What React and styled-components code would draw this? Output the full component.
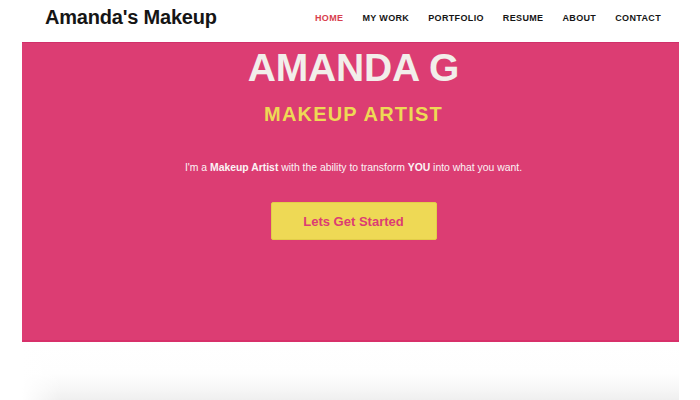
import React from 'react'
import styled, { createGlobalStyle } from 'styled-components'

const pink = '#dc3d73'
const yellow = '#eed955'

const Global = createGlobalStyle`
  body {
    margin: 0;
    background: #fff;
    font-family: "Liberation Sans", Arial, sans-serif;
    overflow: hidden;
  }
`

const Page = styled.div`
  width: 700px;
  height: 400px;
  display: flex;
  flex-direction: column;
  overflow: hidden;
  & > * { flex-shrink: 0; }
`

const Header = styled.header`
  height: 42px;
  display: flex;
  align-items: center;
  justify-content: space-between;
  padding: 0 39px 0 45px;
  box-sizing: border-box;
`

const Logo = styled.h1`
  margin: 0;
  margin-top: -7px;
  font-size: 20px;
  font-weight: 700;
  color: #151515;
  letter-spacing: -0.2px;
`

const Nav = styled.ul`
  display: flex;
  gap: 19px;
  margin: 0;
  margin-top: -7px;
  padding: 0;
  list-style: none;
`

const NavItem = styled.li`
  font-size: 9px;
  font-weight: 700;
  letter-spacing: 0.35px;
  color: ${props => props.active ? '#d8404e' : '#151515'};
`

const Hero = styled.section`
  margin: 0 21px 0 22px;
  padding-left: 6px;
  height: 300px;
  background: ${pink};
  border-top: 1px solid #d0306a;
  border-bottom: 2px solid #d8306a;
  box-sizing: border-box;
  display: flex;
  flex-direction: column;
  align-items: center;
  color: #fff;
`

const Name = styled.h2`
  margin: 2px 0 0;
  font-size: 39px;
  font-weight: 700;
  color: #f2eeea;
  letter-spacing: -0.2px;
  line-height: 46px;
`

const Role = styled.h3`
  margin: 11px 0 0;
  font-size: 20px;
  font-weight: 700;
  color: ${yellow};
  letter-spacing: 1.2px;
  line-height: 24px;
`

const Tagline = styled.p`
  margin: 36px 0 0;
  font-size: 10.4px;
  color: #fbf3f5;
  b { font-weight: 700; }
`

const StartButton = styled.button`
  margin-top: 29px;
  width: 166px;
  height: 38px;
  border: 1px solid #e2cd48;
  border-radius: 2px;
  background: ${yellow};
  color: ${pink};
  font-family: inherit;
  font-size: 13px;
  font-weight: 700;
`

const Lower = styled.div`
  flex: 1 0 auto;
  margin: 0 21px 0 22px;
  background:
    linear-gradient(to right, #fff 0, rgba(255, 255, 255, 0) 40px),
    linear-gradient(to bottom, #fff 0, #fefefe 55%, #f6f6f6 82%, #efefef 100%);
`

const navLinks = ['HOME', 'MY WORK', 'PORTFOLIO', 'RESUME', 'ABOUT', 'CONTACT']

export default function App() {
  return (
    <Page>
      <Global />
      <Header>
        <Logo>Amanda's Makeup</Logo>
        <Nav>
          {navLinks.map((l, i) => (
            <NavItem key={l} active={i === 0}>{l}</NavItem>
          ))}
        </Nav>
      </Header>
      <Hero>
        <Name>AMANDA G</Name>
        <Role>MAKEUP ARTIST</Role>
        <Tagline>
          I'm a <b>Makeup Artist</b> with the ability to transform <b>YOU</b> into what you want.
        </Tagline>
        <StartButton>Lets Get Started</StartButton>
      </Hero>
      <Lower />
    </Page>
  )
}
